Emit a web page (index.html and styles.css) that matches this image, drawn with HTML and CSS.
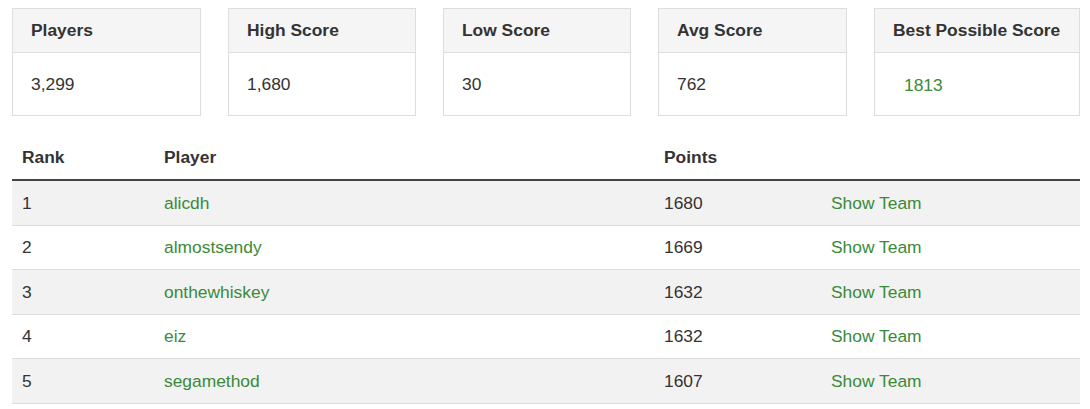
FILE: index.html
```html
<!DOCTYPE html>
<html>
<head>
<meta charset="utf-8">
<link rel="stylesheet" href="styles.css">
</head>
<body>
<div class="page">
  <div class="stats">
    <div class="card"><div class="card-h">Players</div><div class="card-b">3,299</div></div>
    <div class="card"><div class="card-h">High Score</div><div class="card-b">1,680</div></div>
    <div class="card"><div class="card-h">Low Score</div><div class="card-b">30</div></div>
    <div class="card"><div class="card-h">Avg Score</div><div class="card-b">762</div></div>
    <div class="card"><div class="card-h">Best Possible Score</div><div class="card-b"><a class="link best">1813</a></div></div>
  </div>
  <table class="board">
    <colgroup><col class="c1"><col class="c2"><col class="c3"><col></colgroup>
    <thead><tr><th>Rank</th><th>Player</th><th>Points</th><th></th></tr></thead>
    <tbody>
      <tr><td>1</td><td><a class="link">alicdh</a></td><td>1680</td><td><a class="link">Show Team</a></td></tr>
      <tr><td>2</td><td><a class="link">almostsendy</a></td><td>1669</td><td><a class="link">Show Team</a></td></tr>
      <tr><td>3</td><td><a class="link">onthewhiskey</a></td><td>1632</td><td><a class="link">Show Team</a></td></tr>
      <tr><td>4</td><td><a class="link">eiz</a></td><td>1632</td><td><a class="link">Show Team</a></td></tr>
      <tr><td>5</td><td><a class="link">segamethod</a></td><td>1607</td><td><a class="link">Show Team</a></td></tr>
    </tbody>
  </table>
</div>
</body>
</html>
```
FILE: styles.css
```css
html, body { margin: 0; padding: 0; background: #fff; }
body { font-family: "Liberation Sans", Arial, sans-serif; font-size: 17.4px; color: #333; }
.page { padding: 8px 10px 0 12px; }
.stats { display: grid; grid-template-columns: 189px 188px 188px 189px 1fr; gap: 27px; }
.card { border: 1px solid #ddd; }
.card-h { background: #f5f5f5; border-bottom: 1px solid #ddd; height: 44px; box-sizing: border-box; padding: 0 18px; display: flex; align-items: center; font-weight: bold; }
.card-b { height: 62px; padding: 0 18px; display: flex; align-items: center; }
.link { color: #3a8a3a; text-decoration: none; }
.best { padding-left: 11px; padding-top: 2px; }
.board { width: 100%; border-collapse: collapse; margin-top: 20px; }
.c1 { width: 142px; }
.c2 { width: 500px; }
.c3 { width: 167px; }
.board th { text-align: left; font-weight: bold; padding: 11px 10px 12px; line-height: 20px; border-bottom: 2px solid #444; }
.board td { padding: 12.5px 10px 11.5px; line-height: 19.5px; border-top: 1px solid #ddd; }
.board tbody tr:first-child td { border-top: 0; }
.board tbody tr:nth-child(odd) td { background: #f2f2f2; }
.board tbody tr:last-child td { border-bottom: 1px solid #ddd; }
```
